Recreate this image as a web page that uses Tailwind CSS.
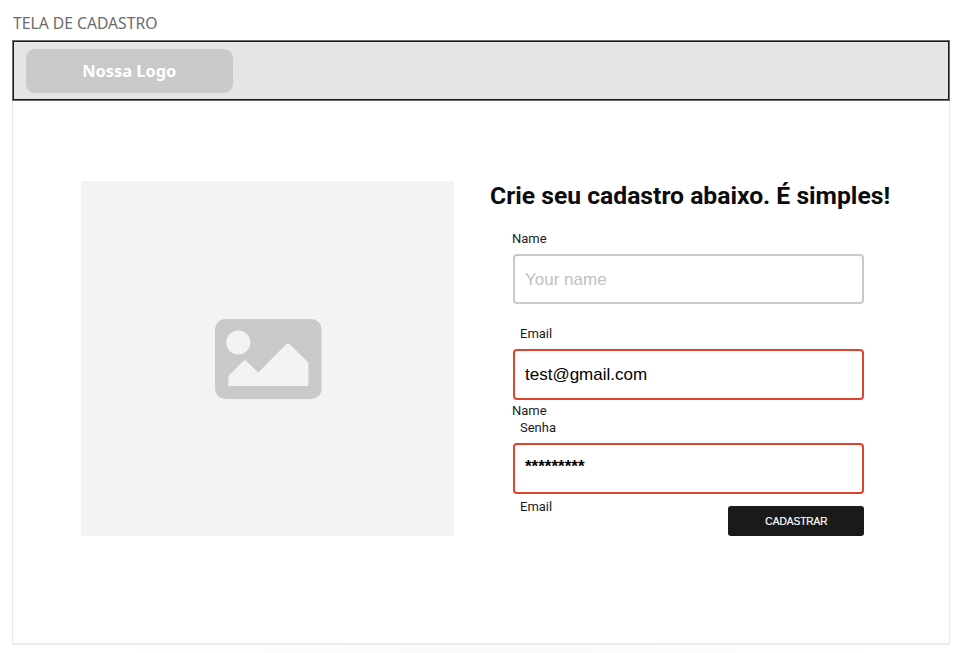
<!DOCTYPE html>
<html lang="pt-BR">
<head>
<meta charset="utf-8">
<title>Tela de cadastro</title>
<script src="https://cdn.jsdelivr.net/npm/@tailwindcss/browser@4"></script>
</head>
<body class="bg-white">
<div class="h-[653px] w-[960px] overflow-hidden pl-3 bg-[radial-gradient(ellipse_400px_20px_at_500px_660px,#f6f6f6,#ffffff)]">
  <p class="h-10 pt-3 pl-px font-['Noto_Sans',sans-serif] text-[15.7px] leading-[22px] text-[#6b6b6b]">TELA DE CADASTRO</p>
  <main class="flex h-[605px] w-[938px] flex-col">
    <header class="flex h-[61px] shrink-0 border border-[#6b6b6b] bg-[#e5e5e5] pt-2 pl-[13px] shadow-[inset_0_0_0_1px_#1c1c1c]">
      <div class="flex h-[44px] w-[206.5px] items-center justify-center rounded-[9px] bg-[#c9c9c9] font-['Noto_Sans',sans-serif] text-[16.4px] font-bold text-white">Nossa Logo</div>
    </header>
    <div class="flex grow items-start border-x border-b-2 border-[#eaeaea] pt-20 pl-17">
      <div class="flex h-[355px] w-[373px] items-center justify-center bg-[#f3f3f3] pl-px">
        <svg class="h-20 w-[107px]" viewBox="0 0 107 80">
          <rect width="106.5" height="80" rx="10" fill="#c9c9c9"/>
          <circle cx="23.3" cy="23.5" r="12" fill="#f3f3f3"/>
          <path d="M13.3 67V57L28.3 42Q29.8 40.5 31.3 42L43.3 53.5L71.5 25Q73 23.5 74.5 25L93.3 43.5V67Z" fill="#f3f3f3"/>
        </svg>
      </div>
      <form class="ml-9 flex w-[410px] flex-col font-[Roboto,sans-serif] text-[13px] leading-4 text-[#1c1c1c]">
        <h1 class="h-[50px] whitespace-nowrap text-[24.7px] leading-[29px] font-bold text-[#0c0c0c]">Crie seu cadastro abaixo. É simples!</h1>
        <div class="flex w-[352px] flex-col ml-[22px]">
          <label class="h-[23px]">Name</label>
          <div class="ml-px h-[50px] rounded border-2 border-[#c9c9c9] px-[10px] font-['Liberation_Sans',sans-serif] text-[17px] leading-[48px] text-[#c0c0c0]">Your name</div>
          <label class="mt-[22px] ml-2 h-[23px]">Email</label>
          <div class="ml-px h-[51px] rounded border-2 border-[#df422d] px-[10px] font-['Liberation_Sans',sans-serif] text-[17px] leading-[47px] text-black">test@gmail.com</div>
          <label class="mt-[3px] h-4">Name</label>
          <label class="ml-2 mt-px h-[23px]">Senha</label>
          <div class="ml-px h-[51px] rounded border-2 border-[#df422d] px-[10px] font-['Liberation_Sans',sans-serif] text-[17px] leading-[44px] font-bold text-black">*********</div>
          <div class="flex items-start justify-between pl-2">
            <label class="mt-[5px]">Email</label>
            <button type="button" class="mt-3 flex h-[30px] w-[136px] items-center justify-center rounded-[3px] bg-[#1a1a1a] pt-px pl-px font-['Liberation_Sans',sans-serif] text-[10.1px] text-white [-webkit-text-stroke:0.2px_white]">CADASTRAR</button>
          </div>
        </div>
      </form>
    </div>
  </main>
</div>
</body>
</html>
